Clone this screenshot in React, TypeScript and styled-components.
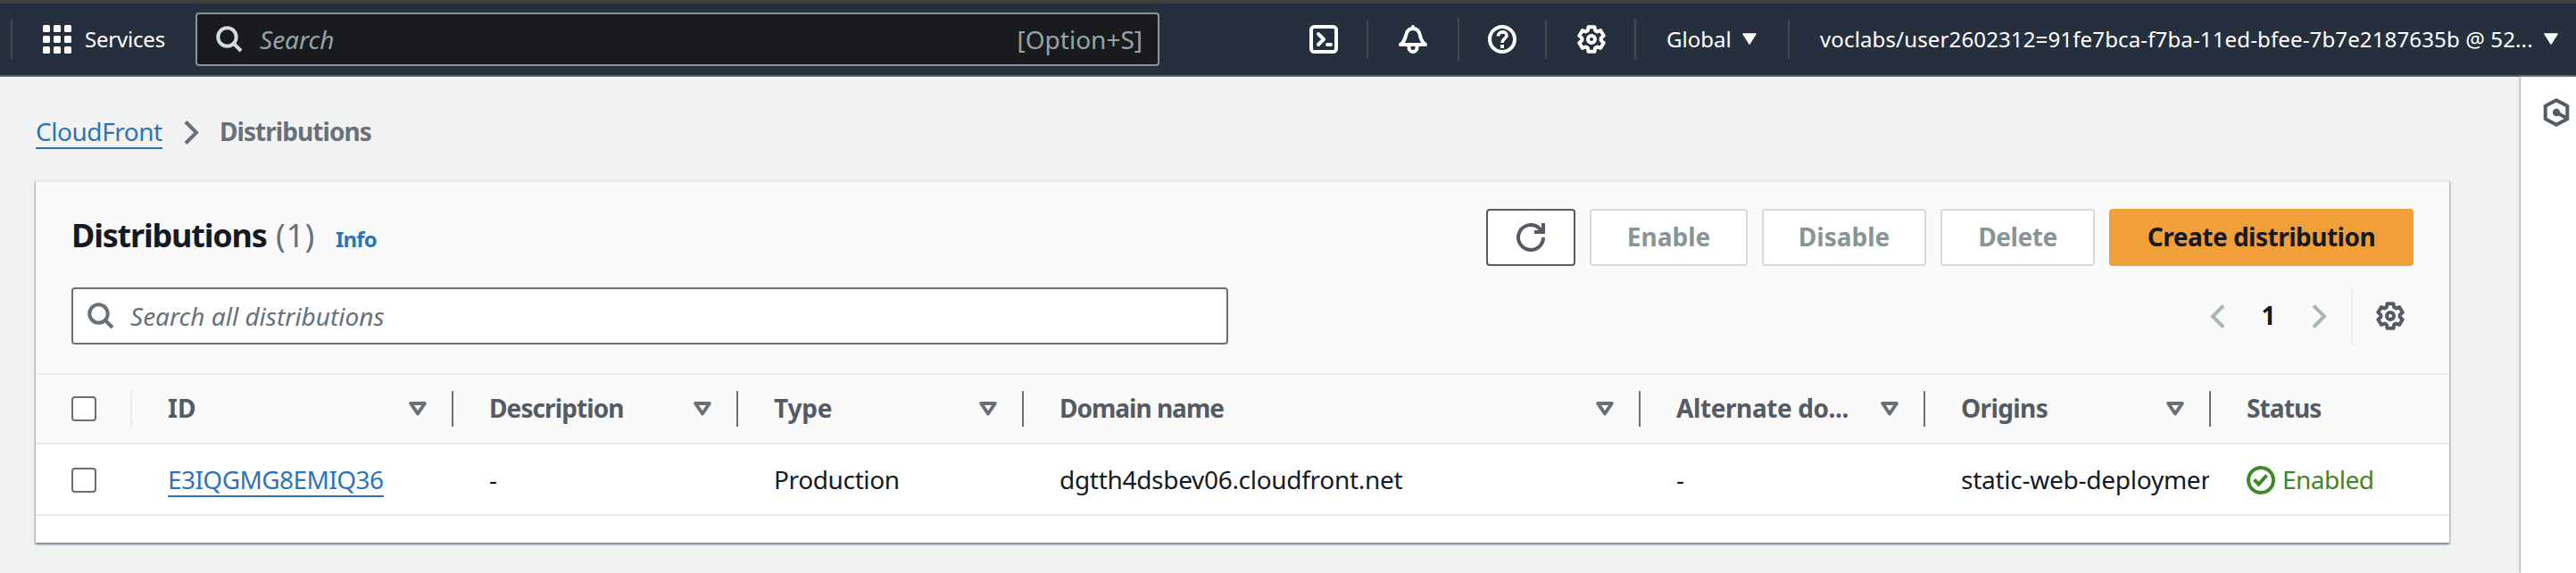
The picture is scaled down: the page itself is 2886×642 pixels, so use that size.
import React from 'react';
import styled, { createGlobalStyle, css } from 'styled-components';

const GlobalStyle = createGlobalStyle`
  *, *::before, *::after { box-sizing: border-box; }
  html, body { margin: 0; padding: 0; background: #f1f3f3; }
  body { font-family: "Noto Sans", "Open Sans", sans-serif; font-size: 28px; color: #16191f; }
  svg { display: block; flex: none; }
`;

const Page = styled.div`
  display: flex;
  flex-direction: column;
  height: 642px;
  width: 2886px;
  overflow: hidden;
`;

const Label = styled.span<{ $ls?: number; $size?: number; $w?: number; $drop?: number; $bold?: boolean; $italic?: boolean; $color?: string }>`
  display: block;
  flex: none;
  white-space: nowrap;
  line-height: 1.35;
  padding-top: ${(p) => p.$drop ?? 0}px;
  ${(p) => p.$w && css`width: ${p.$w}px;`}
  font-size: ${(p) => p.$size ?? 28}px;
  font-weight: ${(p) => (p.$bold ? 700 : 400)};
  font-style: ${(p) => (p.$italic ? 'italic' : 'normal')};
  letter-spacing: ${(p) => p.$ls ?? 0}px;
  color: ${(p) => p.$color ?? 'inherit'};
`;

const TopBar = styled.header`
  display: flex;
  align-items: center;
  flex: none;
  height: 86px;
  padding: 0 20px 0 12px;
  background: #262f3e;
  border-top: 4px solid #404040;
  border-bottom: 2px solid #5a5f69;
  color: #fff;
`;

const NavDivider = styled.span<{ $tall?: boolean }>`
  flex: none;
  width: 2px;
  height: ${(p) => (p.$tall ? 48 : 44)}px;
  background: #414750;
`;

const ServicesMenu = styled.div`
  display: flex;
  align-items: center;
  gap: 15px;
  width: 171px;
  margin-left: 34px;
`;

const GlobalSearch = styled.div`
  display: flex;
  align-items: center;
  width: 1080px;
  height: 60px;
  padding: 0 17px 0 21px;
  border: 2px solid #879596;
  border-radius: 4px;
  background: #1a1b1f;
  color: #95a5a6;
`;

const SearchText = styled.div`
  flex: 1;
  margin-left: 19px;
`;

const NavTools = styled.div`
  display: flex;
  align-items: center;
  margin-left: auto;
`;

const NavIcon = styled.div<{ $left: number; $right: number }>`
  padding: 0 ${(p) => p.$right}px 0 ${(p) => p.$left}px;
`;

const NavMenu = styled.div<{ $w: number; $left: number; $right?: number }>`
  display: flex;
  align-items: center;
  justify-content: space-between;
  width: ${(p) => p.$w}px;
  margin: 0 ${(p) => p.$right ?? 0}px 0 ${(p) => p.$left}px;
`;

const Body = styled.div`
  display: flex;
  flex: 1;
`;

const Main = styled.main`
  flex: 1;
  padding: 41px 80px 0 40px;
`;

const HelpRail = styled.aside`
  width: 62px;
  padding: 24px 0 0 24px;
  background: #fff;
  box-shadow: -1px 0 2px #9aa2a7;
`;

const Breadcrumbs = styled.nav`
  display: flex;
  align-items: center;
  height: 40px;
`;

const Link = styled.a<{ $w: number; $ls: number }>`
  display: block;
  width: ${(p) => p.$w}px;
  height: 40px;
  line-height: 41px;
  white-space: nowrap;
  letter-spacing: ${(p) => p.$ls}px;
  color: #2e73b8;
  border-bottom: 2px solid #2e73b8;
`;

const Crumb = styled.div`
  margin: 2px 23px 0 24px;
`;

const Card = styled.section`
  margin-top: 35px;
  height: 406px;
  border-top: 2px solid #eaecec;
  background: #fff;
  box-shadow: 0 2px 2px #7f868f, 1px 1px 2px #b9bfc3, -1px 1px 2px #b9bfc3;
`;

const CardHead = styled.div`
  height: 214px;
  padding: 30px 40px 0;
  background: #fafafa;
`;

const HeadRow = styled.div`
  display: flex;
  align-items: center;
  justify-content: space-between;
  height: 64px;
`;

const FilterRow = styled(HeadRow)`
  margin-top: 24px;
`;

const Title = styled.h2`
  display: flex;
  align-items: baseline;
  margin: -4px 0 0;
  font-size: 36px;
`;

const Actions = styled.div`
  display: flex;
  gap: 16px;
`;

const Button = styled.button<{ $w: number; $kind?: 'normal' | 'disabled' | 'primary' }>`
  display: flex;
  align-items: center;
  justify-content: center;
  width: ${(p) => p.$w}px;
  height: 64px;
  padding: 0;
  font-family: inherit;
  border-radius: 4px;
  background: #fff;
  border: 2px solid #545b64;
  color: #545b64;
  ${(p) => p.$kind === 'disabled' && css`
    border-color: #d5dbdb;
    color: #879596;
  `}
  ${(p) => p.$kind === 'primary' && css`
    border-color: #f19f38;
    background: #f19f38;
    color: #16191f;
  `}
`;

const FilterInput = styled.div`
  display: flex;
  align-items: center;
  gap: 18px;
  width: 1296px;
  height: 64px;
  padding: 0 16px;
  border: 2px solid #687078;
  border-radius: 4px;
  background: #fff;
  color: #687078;
`;

const Pager = styled.div`
  display: flex;
  align-items: center;
  height: 64px;
  padding-right: 10px;
`;

const PagerDivider = styled.span`
  width: 2px;
  height: 64px;
  margin: 0 26px 0 27px;
  background: #eaeded;
`;

const PageNumber = styled.div`
  display: flex;
  justify-content: center;
  width: 97px;
`;

const columns = '108px 360px 319px 320px 691px 319px 320px 1fr';

const Row = styled.div<{ $head?: boolean }>`
  display: grid;
  grid-template-columns: ${columns};
  height: 80px;
  align-items: center;
  padding-top: ${(p) => (p.$head ? 0 : 2)}px;
  border-bottom: 2px solid #eaecec;
  ${(p) => p.$head && css`
    border-top: 2px solid #eaecec;
    background: #fafafa;
    color: #545b64;
  `}
`;

const HeaderCell = styled.div<{ $line?: string }>`
  display: flex;
  align-items: center;
  justify-content: space-between;
  height: 40px;
  padding: 0 28px 0 40px;
  ${(p) => p.$line && css`border-right: 2px solid ${p.$line};`}
`;

const Cell = styled.div`
  display: flex;
  align-items: center;
  gap: 8px;
  height: 46px;
  padding-left: 40px;
  overflow: hidden;
`;

const LinkCell = styled(Cell)`
  padding-bottom: 2px;
`;

const ClippedCell = styled(Cell)`
  margin-right: 2px;
`;

const Checkbox = styled.span`
  width: 28px;
  height: 28px;
  border: 2px solid #687078;
  border-radius: 4px;
  background: #fff;
`;

const SearchIcon = ({ color }: { color: string }) => (
  <svg width="30" height="30" viewBox="0 0 30 30" fill="none" stroke={color} strokeWidth="4">
    <circle cx="12.5" cy="12.5" r="10.2" />
    <path d="M19.5 19.5 28 28" />
  </svg>
);

const toothPath = (() => {
  const pts: string[] = [];
  for (let i = 0; i < 6; i++) {
    const mid = -90 + i * 60;
    [[-23, 10.7], [-14, 14.2], [14, 14.2], [23, 10.7]].forEach(([a, r]) => {
      const t = ((mid + a) * Math.PI) / 180;
      pts.push(`${(16 + r * Math.cos(t)).toFixed(2)} ${(16 + r * Math.sin(t)).toFixed(2)}`);
    });
  }
  return `M${pts.join('L')}Z`;
})();

const GearIcon = ({ color }: { color: string }) => (
  <svg width="32" height="32" viewBox="0 0 32 32" fill="none" stroke={color} strokeWidth="4" strokeLinejoin="round">
    <path d={toothPath} />
    <circle cx="16" cy="16" r="4" />
  </svg>
);

const GridIcon = () => (
  <svg width="32" height="32" viewBox="0 0 32 32" fill="#fff">
    {[0, 12, 24].map((y) => [0, 12, 24].map((x) => <rect key={`${x}-${y}`} x={x} y={y} width="8" height="8" rx="1.5" />))}
  </svg>
);

const ShellIcon = () => (
  <svg width="32" height="32" viewBox="0 0 32 32" fill="none" stroke="#fff" strokeWidth="4" strokeLinecap="round" strokeLinejoin="round">
    <rect x="2" y="2" width="28" height="28" rx="3.5" />
    <path d="M10 10l6 6-6 6M20 22h4" />
  </svg>
);

const BellIcon = () => (
  <svg width="32" height="32" viewBox="0 0 32 32" fill="none" stroke="#fff" strokeWidth="4" strokeLinecap="round" strokeLinejoin="round">
    <path d="M16 2v1.5M2 22h28c-3.5-2.5-5-5.5-6-10-.8-4.5-3.5-8-8-8s-7.2 3.5-8 8c-1 4.5-2.5 7.5-6 10z" />
    <path d="M11.5 23v2.5a4.5 4.5 0 0 0 9 0V23" />
  </svg>
);

const HelpIcon = () => (
  <svg width="32" height="32" viewBox="0 0 32 32" fill="none" stroke="#fff" strokeWidth="4">
    <circle cx="16" cy="16" r="14" />
    <path d="M11.5 12.5c0-6 9.5-6 9.5-.8 0 3.5-5 3.6-5 8.3" strokeWidth="3.6" />
    <path d="M16 22v4" />
  </svg>
);

const CaretIcon = () => (
  <svg width="16" height="13" viewBox="0 0 16 13" fill="#fff" stroke="#fff" strokeWidth="1.5" strokeLinejoin="round">
    <path d="M1 1h14L8 12z" />
  </svg>
);

const SortIcon = () => (
  <svg width="20" height="16" viewBox="0 0 20 16" fill="none" stroke="#687078" strokeWidth="4" strokeLinejoin="round">
    <path d="M2.2 2h15.6L10 13.5z" />
  </svg>
);

const ChevronIcon = ({ color, flip }: { color: string; flip?: boolean }) => (
  <svg width="17" height="27" viewBox="0 0 17 27" fill="none" stroke={color} strokeWidth="4">
    <path d={flip ? 'M15 1.5 3 13.5l12 12' : 'M2 1.5l12 12-12 12'} />
  </svg>
);

const RefreshIcon = () => (
  <svg width="34" height="32" viewBox="0 0 34 32" fill="none" stroke="#545b64" strokeWidth="4">
    <path d="M31 16a14 14 0 1 1-4.1-9.9L31 10" />
    <path d="M31 0v10H21" />
  </svg>
);

const HexIcon = () => (
  <svg width="32" height="32" viewBox="0 0 32 32" fill="none" stroke="#545b64" strokeWidth="4" strokeLinejoin="round">
    <path d="M16 2.2 28.3 8.8v14.4L16 29.8 3.7 23.2V8.8z" />
    <circle cx="16" cy="16" r="4.2" fill="#545b64" stroke="none" />
    <path d="M16 16l11 6" />
  </svg>
);

const SuccessIcon = () => (
  <svg width="32" height="32" viewBox="0 0 32 32" fill="none" stroke="#3f8624" strokeWidth="4">
    <circle cx="16" cy="16" r="14" />
    <path d="M8.5 15.5l5 5 9-10" />
  </svg>
);

const header = [
  { text: 'ID', ls: 0 },
  { text: 'Description', ls: -0.9 },
  { text: 'Type', ls: -0.2 },
  { text: 'Domain name', ls: -1 },
  { text: 'Alternate do...', ls: -0.4 },
  { text: 'Origins', ls: -0.6 },
];

export default function App() {
  return (
    <Page>
      <GlobalStyle />
      <TopBar>
        <NavDivider />
        <ServicesMenu>
          <GridIcon />
          <Label $size={24} $ls={-0.2} $drop={1}>Services</Label>
        </ServicesMenu>
        <GlobalSearch>
          <SearchIcon color="#d5dbdb" />
          <SearchText>
            <Label $italic $drop={2}>Search</Label>
          </SearchText>
          <Label $drop={2}>[Option+S]</Label>
        </GlobalSearch>
        <NavTools>
          <NavIcon $left={32} $right={32}><ShellIcon /></NavIcon>
          <NavDivider />
          <NavIcon $left={34} $right={34}><BellIcon /></NavIcon>
          <NavDivider $tall />
          <NavIcon $left={32} $right={32}><HelpIcon /></NavIcon>
          <NavDivider />
          <NavIcon $left={34} $right={32}><GearIcon color="#fff" /></NavIcon>
          <NavDivider />
          <NavMenu $w={101} $left={34} $right={35}>
            <Label $size={24} $w={70} $drop={1}>Global</Label>
            <CaretIcon />
          </NavMenu>
          <NavDivider />
          <NavMenu $w={827} $left={34}>
            <Label $size={24} $w={799} $ls={0.14} $drop={1}>voclabs/user2602312=91fe7bca-f7ba-11ed-bfee-7b7e2187635b @ 52...</Label>
            <CaretIcon />
          </NavMenu>
        </NavTools>
      </TopBar>
      <Body>
        <Main>
          <Breadcrumbs>
            <Link $w={142} $ls={-0.45}>CloudFront</Link>
            <Crumb><ChevronIcon color="#687078" /></Crumb>
            <Label $bold $ls={-0.95} $drop={2} $color="#687078">Distributions</Label>
          </Breadcrumbs>
          <Card>
            <CardHead>
              <HeadRow>
                <Title>
                  <Label $size={36} $bold $ls={-1.2} $w={229}>Distributions</Label>
                  <Label $size={36} $w={67} $ls={0.6} $color="#687078">(1)</Label>
                  <Label $size={24} $bold $ls={-0.8} $color="#2e73b8">Info</Label>
                </Title>
                <Actions>
                  <Button $w={100}><RefreshIcon /></Button>
                  <Button $w={177} $kind="disabled"><Label $bold>Enable</Label></Button>
                  <Button $w={184} $kind="disabled"><Label $bold>Disable</Label></Button>
                  <Button $w={173} $kind="disabled"><Label $bold $ls={-0.4}>Delete</Label></Button>
                  <Button $w={341} $kind="primary"><Label $bold $ls={-0.5}>Create distribution</Label></Button>
                </Actions>
              </HeadRow>
              <FilterRow>
                <FilterInput>
                  <SearchIcon color="#687078" />
                  <Label $italic $drop={2}>Search all distributions</Label>
                </FilterInput>
                <Pager>
                  <ChevronIcon color="#aab7b8" flip />
                  <PageNumber><Label $bold>1</Label></PageNumber>
                  <ChevronIcon color="#aab7b8" />
                  <PagerDivider />
                  <GearIcon color="#545b64" />
                </Pager>
              </FilterRow>
            </CardHead>
            <Row $head>
              <HeaderCell $line="#eaeded"><Checkbox /></HeaderCell>
              {header.map((h) => (
                <HeaderCell key={h.text} $line="#687078">
                  <Label $bold $ls={h.ls}>{h.text}</Label>
                  <SortIcon />
                </HeaderCell>
              ))}
              <HeaderCell><Label $bold $ls={-0.9}>Status</Label></HeaderCell>
            </Row>
            <Row>
              <Cell><Checkbox /></Cell>
              <LinkCell><Link $w={242} $ls={-0.57}>E3IQGMG8EMIQ36</Link></LinkCell>
              <Cell><Label>-</Label></Cell>
              <Cell><Label $ls={-0.37}>Production</Label></Cell>
              <Cell><Label $ls={-0.3}>dgtth4dsbev06.cloudfront.net</Label></Cell>
              <Cell><Label>-</Label></Cell>
              <ClippedCell><Label $ls={-0.25}>static-web-deployment</Label></ClippedCell>
              <Cell>
                <SuccessIcon />
                <Label $ls={-0.5} $color="#3f8624">Enabled</Label>
              </Cell>
            </Row>
          </Card>
        </Main>
        <HelpRail><HexIcon /></HelpRail>
      </Body>
    </Page>
  );
}
